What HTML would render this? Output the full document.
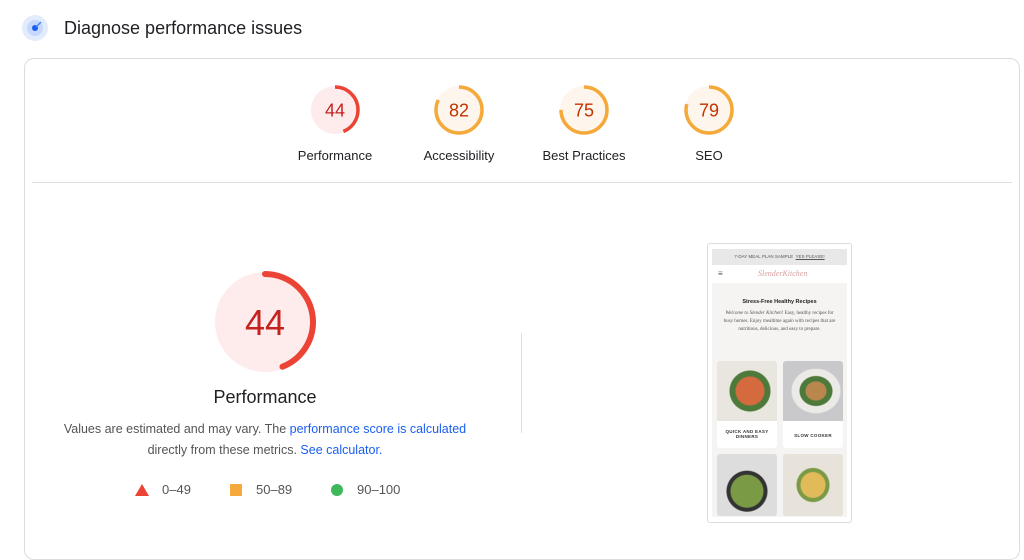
<!DOCTYPE html>
<html><head><meta charset="utf-8"><style>
body{margin:0;width:1024px;height:542px;background:#fff;font-family:"Liberation Sans",Arial,sans-serif;position:relative;overflow:hidden}
.a{position:absolute}
.card{left:24px;top:58px;width:994px;height:500px;border:1px solid #dadce0;border-radius:10px}
.lbl{font-size:13px;color:#202124;text-align:center;width:120px}
.g{position:absolute}
.pt{font-size:12.5px;color:#555;text-align:center;line-height:21px}
a{color:#1a5ef0;text-decoration:none}
.leg{font-size:13px;color:#555}
.tile{position:absolute;background:#fff;border-radius:3px;overflow:hidden}
.cap{font-size:4.5px;font-weight:bold;text-align:center;color:#333;letter-spacing:.3px}
</style></head><body>
<svg class="a" style="left:22px;top:15px" width="26" height="26"><circle cx="13" cy="13" r="13" fill="#e3ecfd"/><circle cx="13" cy="13" r="8" fill="#c6d8fb"/><circle cx="13" cy="13" r="3" fill="#1a5ef0"/><path d="M14 12 L19 7" stroke="#4a84f5" stroke-width="1.5"/></svg>
<div class="a" style="left:64px;top:18px;font-size:18px;color:#202124">Diagnose performance issues</div>
<div class="a card"></div>
<div class="a" style="left:32px;top:182px;width:980px;height:1px;background:#e0e0e0"></div>

<svg class="g" style="left:309px;top:84px" width="52" height="52"><circle cx="26" cy="26" r="24" fill="#fdeceb"/><circle cx="26" cy="26" r="23" fill="none" stroke="#eb4335" stroke-width="3.5" stroke-dasharray="63.6 200" transform="rotate(-90 26 26)"/><text x="26" y="32.5" text-anchor="middle" font-size="18" fill="#c5221f" font-family="Liberation Sans">44</text></svg>
<svg class="g" style="left:433px;top:84px" width="52" height="52"><circle cx="26" cy="26" r="24" fill="#fef6ec"/><circle cx="26" cy="26" r="23" fill="none" stroke="#f4a93a" stroke-width="3.5" stroke-dasharray="118.5 200" transform="rotate(-90 26 26)"/><text x="26" y="32.5" text-anchor="middle" font-size="18" fill="#c33300" font-family="Liberation Sans">82</text></svg>
<svg class="g" style="left:558px;top:84px" width="52" height="52"><circle cx="26" cy="26" r="24" fill="#fef6ec"/><circle cx="26" cy="26" r="23" fill="none" stroke="#f4a93a" stroke-width="3.5" stroke-dasharray="108.4 200" transform="rotate(-90 26 26)"/><text x="26" y="32.5" text-anchor="middle" font-size="18" fill="#c33300" font-family="Liberation Sans">75</text></svg>
<svg class="g" style="left:683px;top:84px" width="52" height="52"><circle cx="26" cy="26" r="24" fill="#fef6ec"/><circle cx="26" cy="26" r="23" fill="none" stroke="#f4a93a" stroke-width="3.5" stroke-dasharray="114.2 200" transform="rotate(-90 26 26)"/><text x="26" y="32.5" text-anchor="middle" font-size="18" fill="#c33300" font-family="Liberation Sans">79</text></svg>
<div class="a lbl" style="left:275px;top:148px">Performance</div>
<div class="a lbl" style="left:399px;top:148px">Accessibility</div>
<div class="a lbl" style="left:524px;top:148px">Best Practices</div>
<div class="a lbl" style="left:649px;top:148px">SEO</div>

<svg class="g" style="left:212px;top:269px" width="106" height="106"><circle cx="53" cy="53" r="50" fill="#fdeceb"/><circle cx="53" cy="53" r="48" fill="none" stroke="#eb4335" stroke-width="6" stroke-linecap="round" stroke-dasharray="132.7 400" transform="rotate(-90 53 53)"/><text x="53" y="66" text-anchor="middle" font-size="36" fill="#c5221f" font-family="Liberation Sans">44</text></svg>
<div class="a" style="left:165px;top:387px;width:200px;text-align:center;font-size:18px;color:#202124">Performance</div>
<div class="a pt" style="left:40px;top:419px;width:450px">Values are estimated and may vary. The <a>performance score is calculated</a><br>directly from these metrics. <a>See calculator.</a></div>
<svg class="a" style="left:135px;top:484px" width="14" height="12"><path d="M7 0 L14 12 L0 12Z" fill="#eb4335"/></svg>
<div class="a leg" style="left:162px;top:482px">0–49</div>
<div class="a" style="left:230px;top:484px;width:12px;height:12px;background:#f4a93a"></div>
<div class="a leg" style="left:256px;top:482px">50–89</div>
<div class="a" style="left:331px;top:484px;width:12px;height:12px;border-radius:50%;background:#3cb95b"></div>
<div class="a leg" style="left:357px;top:482px">90–100</div>
<div class="a" style="left:521px;top:333px;width:1px;height:100px;background:#e0e0e0"></div>

<div class="a" style="left:707px;top:243px;width:143px;height:278px;border:1px solid #dadce0;border-radius:3px;background:#fff;overflow:hidden">
 <div class="a" style="left:4px;top:5px;width:135px;height:16px;background:#e8e8e8;font-size:4.5px;color:#555;text-align:center;line-height:16px">7-DAY MEAL PLAN SAMPLE &nbsp;<u>YES PLEASE!</u></div>
 <div class="a" style="left:10px;top:25px;font-size:8px;color:#555">≡</div>
 <div class="a" style="left:50px;top:25px;font-size:8px;color:#d9a0a0;font-style:italic;font-family:'Liberation Serif',serif">SlenderKitchen</div>
 <div class="a" style="left:4px;top:39px;width:135px;height:234px;background:#f5f4f2"></div>
 <div class="a" style="left:4px;top:55px;width:135px;text-align:center;font-size:5.5px;font-weight:bold;color:#222">Stress-Free Healthy Recipes</div>
 <div class="a" style="left:14px;top:66px;width:115px;text-align:center;font-size:5px;line-height:8px;color:#555;font-family:'Liberation Serif',serif"><i>Welcome to Slender Kitchen!</i> Easy, healthy recipes for busy homes. Enjoy mealtime again with recipes that are nutritious, delicious, and easy to prepare.</div>
 <div class="tile" style="left:9px;top:117px;width:60px;height:87px"><div style="height:60px;background:radial-gradient(circle at 55% 50%,#d46a3e 0 14px,#4d7a3a 15px 20px,#e9e6e0 21px)"></div><div class="cap" style="margin-top:8px">QUICK AND EASY<br>DINNERS</div></div>
 <div class="tile" style="left:75px;top:117px;width:60px;height:87px"><div style="height:60px;background:radial-gradient(ellipse at 55% 50%,#b9874d 0 10px,#4d7a3a 11px 16px,#eceae6 17px 24px,#c9c9cc 25px)"></div><div class="cap" style="margin-top:12px">SLOW COOKER</div></div>
 <div class="tile" style="left:9px;top:210px;width:60px;height:62px;background:radial-gradient(circle at 50% 60%,#7a9a45 0 16px,#333 17px 20px,#ddd 21px)"></div>
 <div class="tile" style="left:75px;top:210px;width:60px;height:62px;background:radial-gradient(ellipse at 50% 50%,#e1bb5a 0 12px,#7a9a45 13px 16px,#e7e2da 17px)"></div>
</div>
</body></html>
